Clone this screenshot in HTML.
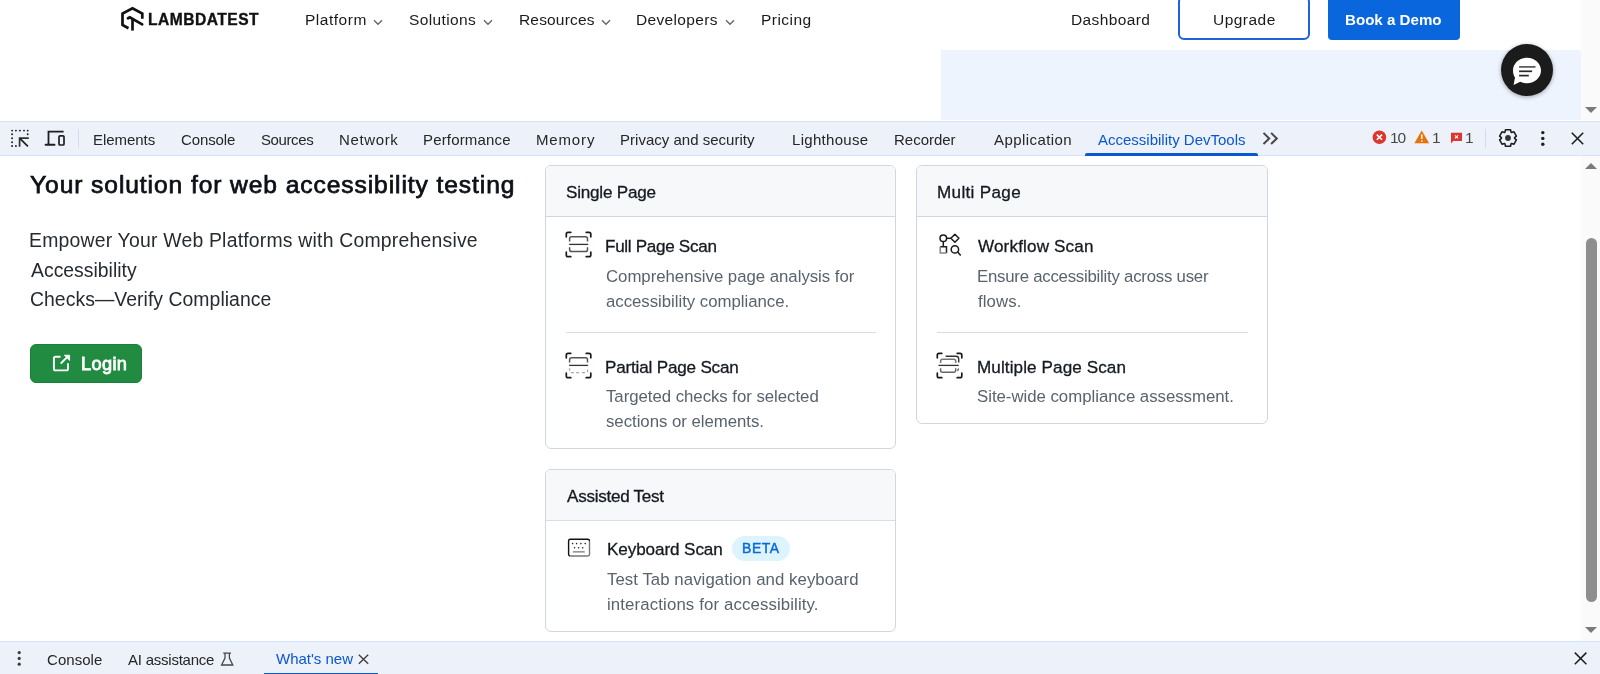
<!DOCTYPE html>
<html><head><meta charset="utf-8"><style>
html,body{margin:0;padding:0;}
body{width:1600px;height:674px;overflow:hidden;position:relative;background:#fff;font-family:"Liberation Sans", sans-serif;}
.a{position:absolute;}
.t{position:absolute;white-space:pre;line-height:normal;font-family:"Liberation Sans", sans-serif;will-change:transform;}
</style></head><body>
<!-- top website area -->
<div class="a" style="left:941px;top:50px;width:641px;height:70px;background:#edf4fe;"></div>
<div class="a" style="left:1581px;top:0;width:19px;height:120px;background:#fafafa;"></div>
<svg class="a" style="left:1584px;top:106px" width="14" height="8" viewBox="0 0 14 8"><path d="M1 1 L13 1 L7 7 Z" fill="#7a7a7a"/></svg>
<!-- logo -->
<svg class="a" style="left:118px;top:4px" width="30" height="30" viewBox="0 0 30 30" fill="none" stroke="#111" stroke-width="2.7" stroke-linejoin="miter" stroke-linecap="butt">
  <path d="M10.5 24.3 L4.5 21 L4.5 9.6 L14.5 4.3 L24.3 9.6 L24.3 14.8"/>
  <path d="M10 14.3 L11.8 13.4 L24.2 20.4" stroke-linecap="round"/>
  <path d="M14.5 14.6 L14.5 26.6"/>
</svg>
<!-- chevrons -->
<svg class="a" style="left:373px;top:19px" width="10" height="7" viewBox="0 0 10 7"><path d="M1 1.2 L5 5.2 L9 1.2" fill="none" stroke="#666" stroke-width="1.4"/></svg>
<svg class="a" style="left:483px;top:19px" width="10" height="7" viewBox="0 0 10 7"><path d="M1 1.2 L5 5.2 L9 1.2" fill="none" stroke="#666" stroke-width="1.4"/></svg>
<svg class="a" style="left:601px;top:19px" width="10" height="7" viewBox="0 0 10 7"><path d="M1 1.2 L5 5.2 L9 1.2" fill="none" stroke="#666" stroke-width="1.4"/></svg>
<svg class="a" style="left:725px;top:19px" width="10" height="7" viewBox="0 0 10 7"><path d="M1 1.2 L5 5.2 L9 1.2" fill="none" stroke="#666" stroke-width="1.4"/></svg>
<!-- buttons -->
<div class="a" style="left:1178px;top:-4px;width:131.5px;height:44px;box-sizing:border-box;border:2px solid #1f62da;border-radius:6px;"></div>
<div class="a" style="left:1328px;top:-4px;width:132px;height:44px;background:#0a66dc;border-radius:4px;"></div>
<!-- chat bubble -->
<div class="a" style="left:1501px;top:44px;width:52px;height:52px;border-radius:50%;background:#1b1b1b;box-shadow:0 1px 4px rgba(0,0,0,0.35);"></div>
<svg class="a" style="left:1510px;top:56px" width="34" height="32" viewBox="0 0 34 32">
  <path d="M17 1.8 C24.9 1.8 31 7.6 31 14.5 C31 21.4 24.9 27.2 17 27.2 C14.4 27.2 12.2 26.7 10.2 25.8 L3.6 29 L5 21.6 C3.6 19.5 3 17.2 3 14.5 C3 7.6 9.1 1.8 17 1.8 Z" fill="#fff"/>
  <path d="M9.1 10.9 H25.5" stroke="#555" stroke-width="1.7"/>
  <path d="M9.1 15.3 H22.1" stroke="#2a2a2a" stroke-width="1.7"/>
  <path d="M9.1 19.6 H18.8" stroke="#2a2a2a" stroke-width="1.7"/>
</svg>

<!-- devtools toolbar -->
<div class="a" style="left:0;top:121px;width:1600px;height:35px;background:#edf1f9;border-top:1px solid #d3e3fd;box-sizing:border-box;"></div>
<div class="a" style="left:0;top:155px;width:1600px;height:1px;background:#d3e3fd;"></div>
<!-- inspect icon -->
<svg class="a" style="left:8px;top:126px" width="24" height="24" viewBox="0 0 24 24" fill="#1f1f1f">
  <circle cx="4.1" cy="4.6" r="0.95"/><circle cx="7.9" cy="4.6" r="0.95"/><circle cx="11.9" cy="4.6" r="0.95"/><circle cx="16" cy="4.6" r="0.95"/><circle cx="19.7" cy="4.6" r="0.95"/>
  <circle cx="4.1" cy="8.3" r="0.95"/><circle cx="19.7" cy="8.3" r="0.95"/>
  <circle cx="4.1" cy="12.2" r="0.95"/><circle cx="4.1" cy="16.2" r="0.95"/>
  <circle cx="4.1" cy="20" r="0.95"/><circle cx="7.9" cy="20" r="0.95"/>
  <path d="M11.6 20.8 V12.1 H20.8" fill="none" stroke="#333" stroke-width="1.7"/>
  <path d="M11.8 12.4 L19.9 20.4" fill="none" stroke="#1f1f1f" stroke-width="1.7"/>
</svg>
<!-- device icon -->
<svg class="a" style="left:44px;top:129px" width="22" height="19" viewBox="0 0 22 19" fill="none" stroke="#1f1f1f">
  <path d="M19.6 2.7 H4.5 V15.8" stroke-width="1.8"/>
  <path d="M1.6 15.8 H10.5" stroke-width="2" stroke-linecap="round"/>
  <rect x="15" y="6.8" width="5" height="9.2" rx="1" stroke-width="1.7"/>
</svg>
<div class="a" style="left:78px;top:129px;width:1px;height:19px;background:#cfdcf5;"></div>
<!-- active tab underline -->
<div class="a" style="left:1085px;top:153px;width:173px;height:3px;background:#0b57d0;border-radius:2px 2px 0 0;"></div>
<!-- >> -->
<svg class="a" style="left:1262px;top:132px" width="18" height="14" viewBox="0 0 18 14" fill="none" stroke="#474747" stroke-width="2">
  <path d="M1.5 0.9 L7.2 6.5 L1.5 12"/><path d="M9.1 0.9 L14.8 6.5 L9.1 12"/>
</svg>
<!-- error icon -->
<svg class="a" style="left:1372px;top:130px" width="15" height="15" viewBox="0 0 15 15">
  <circle cx="7.4" cy="7.2" r="6.8" fill="#dc362e"/>
  <path d="M4.8 4.6 L10 9.8 M10 4.6 L4.8 9.8" stroke="#fff" stroke-width="1.6"/>
</svg>
<!-- warning icon -->
<svg class="a" style="left:1414px;top:130px" width="16" height="14" viewBox="0 0 16 14">
  <path d="M7.7 0.6 L15.2 13.2 L0.4 13.2 Z" fill="#e8710a"/>
  <path d="M7.8 4.6 V9" stroke="#fff" stroke-width="1.5"/><circle cx="7.8" cy="11" r="0.85" fill="#fff"/>
</svg>
<!-- issue icon -->
<svg class="a" style="left:1450px;top:132px" width="13" height="13" viewBox="0 0 13 13">
  <path d="M1 0.8 H12 V9 H3.2 L1 11.6 Z" fill="#dc362e"/>
  <path d="M5 3.4 L8 6.4 M8 3.4 L5 6.4" stroke="#fff" stroke-width="1.2"/>
</svg>
<div class="a" style="left:1485px;top:129px;width:1px;height:19px;background:#cfdcf5;"></div>
<!-- gear -->
<svg class="a" style="left:1498.2px;top:128.2px" width="20" height="20" viewBox="0 0 20 20">
  <path d="M7.00 4.12 L7.49 1.78 L12.51 1.78 L13.00 4.12 L13.59 4.46 L15.87 3.71 L18.38 8.07 L16.59 9.65 L16.59 10.35 L18.38 11.93 L15.87 16.29 L13.59 15.54 L13.00 15.88 L12.51 18.22 L7.49 18.22 L7.00 15.88 L6.41 15.54 L4.13 16.29 L1.62 11.93 L3.41 10.35 L3.41 9.65 L1.62 8.07 L4.13 3.71 L6.41 4.46 Z" fill="none" stroke="#1f1f1f" stroke-width="1.6" stroke-linejoin="round"/>
  <circle cx="10" cy="10" r="2.9" fill="#333"/>
</svg>
<!-- kebab -->
<svg class="a" style="left:1539px;top:130px" width="8" height="17" viewBox="0 0 8 17" fill="#1f1f1f">
  <circle cx="3.8" cy="2.6" r="1.7"/><circle cx="3.8" cy="8.4" r="1.7"/><circle cx="3.8" cy="14.2" r="1.7"/>
</svg>
<!-- close -->
<svg class="a" style="left:1570px;top:131px" width="15" height="15" viewBox="0 0 15 15" fill="none" stroke="#1f1f1f" stroke-width="1.6">
  <path d="M1.8 1.8 L13.2 13.2 M13.2 1.8 L1.8 13.2"/>
</svg>

<!-- content scrollbar -->
<div class="a" style="left:1581px;top:156px;width:19px;height:485px;background:#fafafa;"></div>
<svg class="a" style="left:1584px;top:161px" width="14" height="9" viewBox="0 0 14 9"><path d="M1 8 L13 8 L7 2 Z" fill="#7a7a7a"/></svg>
<div class="a" style="left:1586px;top:238px;width:10.5px;height:364px;background:#8e8e8e;border-radius:6px;"></div>
<svg class="a" style="left:1584px;top:626px" width="14" height="9" viewBox="0 0 14 9"><path d="M1 1 L13 1 L7 7 Z" fill="#7a7a7a"/></svg>

<!-- left: login button -->
<div class="a" style="left:30px;top:344px;width:112px;height:39px;background:#218b42;border-radius:6px;box-sizing:border-box;border:1px solid #1a7f37;"></div>
<svg class="a" style="left:52px;top:354px" width="19" height="19" viewBox="0 0 19 19" fill="none" stroke="#fff" stroke-width="1.9" stroke-linecap="round" stroke-linejoin="round">
  <path d="M7.8 2.75 H3.5 Q1.9 2.75 1.9 4.35 V14.8 Q1.9 16.4 3.5 16.4 H14.4 Q16 16.4 16 14.8 V10"/>
  <path d="M9.3 9 L15.6 2.7"/>
  <path d="M12.6 1.2 L17.6 1.2 L17.6 6.2 Z" fill="#fff" stroke-width="0.8"/>
</svg>

<!-- cards -->
<div class="a" style="left:545px;top:165px;width:351px;height:284px;box-sizing:border-box;border:1px solid #d0d7de;border-radius:6px;overflow:hidden;">
  <div style="height:50px;background:#f6f8fa;border-bottom:1px solid #d1d9e0;"></div>
</div>
<div class="a" style="left:566px;top:332px;width:310px;height:1px;background:#d8dee4;"></div>
<div class="a" style="left:916px;top:165px;width:352px;height:259px;box-sizing:border-box;border:1px solid #d0d7de;border-radius:6px;overflow:hidden;">
  <div style="height:50px;background:#f6f8fa;border-bottom:1px solid #d1d9e0;"></div>
</div>
<div class="a" style="left:937px;top:332px;width:311px;height:1px;background:#d8dee4;"></div>
<div class="a" style="left:545px;top:469px;width:351px;height:163px;box-sizing:border-box;border:1px solid #d0d7de;border-radius:6px;overflow:hidden;">
  <div style="height:49.5px;background:#f6f8fa;border-bottom:1px solid #d8dee4;"></div>
</div>
<!-- BETA badge -->
<div class="a" style="left:732px;top:535.5px;width:58px;height:25px;background:#ddf4ff;border-radius:13px;"></div>

<!-- card icons -->
<svg class="a" style="left:562px;top:228px" width="34" height="34" viewBox="0 0 34 34" fill="none">
  <path d="M4.3 8.8 V6 Q4.3 4.3 6 4.3 H8.8 M24.2 4.3 H27 Q28.8 4.3 28.8 6 V8.8 M28.8 24.2 V27 Q28.8 28.7 27 28.7 H24.2 M8.8 28.7 H6 Q4.3 28.7 4.3 27 V24.2" stroke="#1a1a1a" stroke-width="1.7" stroke-linecap="round"/>
  <path d="M7.6 13.6 V10.8 Q7.6 8.7 9.7 8.7 H23.4 Q25.5 8.7 25.5 10.8 V13.6" stroke="#555" stroke-width="1.5"/>
  <path d="M7.1 16.4 H26.2" stroke="#333" stroke-width="1.3"/>
  <path d="M7.6 19.2 V21.4 Q7.6 23.5 9.7 23.5 H23.4 Q25.5 23.5 25.5 21.4 V19.2" stroke="#555" stroke-width="1.5"/>
</svg>
<svg class="a" style="left:562px;top:349px" width="34" height="34" viewBox="0 0 34 34" fill="none">
  <path d="M4.3 8.8 V6 Q4.3 4.3 6 4.3 H8.8 M24.2 4.3 H27 Q28.8 4.3 28.8 6 V8.8 M28.8 24.2 V27 Q28.8 28.7 27 28.7 H24.2 M8.8 28.7 H6 Q4.3 28.7 4.3 27 V24.2" stroke="#1a1a1a" stroke-width="1.7" stroke-linecap="round"/>
  <path d="M7.6 13.6 V10.8 Q7.6 8.7 9.7 8.7 H23.4 Q25.5 8.7 25.5 10.8 V13.6" stroke="#555" stroke-width="1.5"/>
  <path d="M7.1 16.4 H26.2" stroke="#333" stroke-width="1.3"/>
  <path d="M8.8 23.7 H11.9 M14.1 23.7 H17.2 M19.9 23.7 H23 M7.6 19.2 V21.7 M25.5 20.4 V23.2" stroke="#aaa" stroke-width="1.3"/>
</svg>
<svg class="a" style="left:933px;top:228px" width="34" height="34" viewBox="0 0 34 34" fill="none" stroke="#1a1a1a" stroke-width="1.5">
  <circle cx="10.3" cy="10.3" r="3.3"/>
  <path d="M13.6 10.3 H18.2"/>
  <path d="M21.9 6.3 L25.9 10.3 L21.9 14.3 L17.9 10.3 Z" stroke-linejoin="round"/>
  <path d="M10.3 13.6 V18.7"/>
  <path d="M7.2 18.8 H13.5 V25.1" stroke="#222"/>
  <path d="M13.5 25.1 H7.2 V18.8" stroke="#888"/>
  <circle cx="21.9" cy="21.4" r="3.7"/>
  <path d="M24.6 24.1 L27.3 26.9" stroke-linecap="round"/>
</svg>
<svg class="a" style="left:933px;top:349px" width="34" height="34" viewBox="0 0 34 34" fill="none">
  <path d="M4.3 8.8 V6 Q4.3 4.3 6 4.3 H8.8 M24.2 4.3 H27 Q28.8 4.3 28.8 6 V8.8 M28.8 24.2 V27 Q28.8 28.7 27 28.7 H24.2 M8.8 28.7 H6 Q4.3 28.7 4.3 27 V24.2" stroke="#1a1a1a" stroke-width="1.7" stroke-linecap="round"/>
  <path d="M12.6 7.3 H23 Q25.7 7.3 25.7 10 V13.6" stroke="#333" stroke-width="1.4"/>
  <path d="M7.6 13.9 V12.3 Q7.6 10.3 9.6 10.3 H20.7 Q22.7 10.3 22.7 12.3 V13.9" stroke="#777" stroke-width="1.5"/>
  <path d="M5.5 16.4 H25.7" stroke="#333" stroke-width="1.3"/>
  <path d="M7.6 19.2 V21.3 Q7.6 23.3 9.6 23.3 H20.7 Q22.7 23.3 22.7 21.3 V19.2" stroke="#666" stroke-width="1.5"/>
  <path d="M25.5 19.4 Q25.5 21 24.3 21.6" stroke="#555" stroke-width="1.3"/>
</svg>
<svg class="a" style="left:562px;top:530px" width="34" height="34" viewBox="0 0 34 34" fill="none">
  <path d="M27.5 11 Q27.5 9.3 25.8 9.3 H8.3 Q6.6 9.3 6.6 11 V24.3 Q6.6 26 8.3 26" stroke="#111" stroke-width="1.4"/>
  <path d="M8.3 26 H25.8 Q27.5 26 27.5 24.3 V11" stroke="#777" stroke-width="1.4"/>
  <g fill="#222"><circle cx="10.6" cy="13.6" r="0.8"/><circle cx="14.6" cy="13.6" r="0.8"/><circle cx="18.9" cy="13.6" r="0.8"/><circle cx="23.2" cy="13.6" r="0.8"/>
  <circle cx="12.6" cy="17.7" r="0.8"/><circle cx="16.6" cy="17.7" r="0.8"/><circle cx="20.7" cy="17.7" r="0.8"/></g>
  <path d="M11.4 21.9 H22.2" stroke="#777" stroke-width="1.4" stroke-linecap="round"/>
</svg>

<!-- drawer -->
<div class="a" style="left:0;top:641px;width:1600px;height:33px;background:#edf1f9;border-top:1px solid #d3e3fd;box-sizing:border-box;"></div>
<svg class="a" style="left:15px;top:650px" width="8" height="17" viewBox="0 0 8 17" fill="#3b3b3b">
  <circle cx="4.2" cy="2.6" r="1.6"/><circle cx="4.2" cy="8.4" r="1.6"/><circle cx="4.2" cy="14.2" r="1.6"/>
</svg>
<svg class="a" style="left:220px;top:652px" width="15" height="15" viewBox="0 0 15 15" fill="none" stroke="#474747" stroke-width="1.3">
  <path d="M3.2 1.2 H11 M5 1.2 V6 L1.6 13 H12.8 L9.4 6 V1.2"/>
</svg>
<svg class="a" style="left:357px;top:653px" width="13" height="13" viewBox="0 0 13 13" fill="none" stroke="#3b3b3b" stroke-width="1.3">
  <path d="M1.8 1.8 L11.2 10.8 M11.2 1.8 L1.8 10.8"/>
</svg>
<div class="a" style="left:264px;top:673px;width:114px;height:1px;background:#0b57d0;"></div>
<svg class="a" style="left:1573px;top:651px" width="15" height="15" viewBox="0 0 15 15" fill="none" stroke="#1f1f1f" stroke-width="1.5">
  <path d="M1.8 1.6 L13.4 13.2 M13.4 1.6 L1.8 13.2"/>
</svg>

<div class="t" style="left:304.66px;top:11px;font-size:15.5px;font-weight:400;color:#1a1a1a;letter-spacing:0.515px;">Platform</div>
<div class="t" style="left:408.78px;top:11px;font-size:15.5px;font-weight:400;color:#1a1a1a;letter-spacing:0.365px;">Solutions</div>
<div class="t" style="left:518.51px;top:11px;font-size:15.5px;font-weight:400;color:#1a1a1a;letter-spacing:0.171px;">Resources</div>
<div class="t" style="left:636.46px;top:11px;font-size:15.5px;font-weight:400;color:#1a1a1a;letter-spacing:0.345px;">Developers</div>
<div class="t" style="left:760.96px;top:11px;font-size:15.5px;font-weight:400;color:#1a1a1a;letter-spacing:0.455px;">Pricing</div>
<div class="t" style="left:1071.46px;top:11.2px;font-size:15.5px;font-weight:400;color:#1a1a1a;letter-spacing:0.373px;">Dashboard</div>
<div class="t" style="left:1212.51px;top:11.2px;font-size:15.5px;font-weight:400;color:#1a1a1a;letter-spacing:0.465px;">Upgrade</div>
<div class="t" style="left:1345.49px;top:11.3px;font-size:15.11px;font-weight:700;color:#ffffff;">Book a Demo</div>
<div class="t" style="left:148.24px;top:10.5px;font-size:15.6px;font-weight:700;color:#111111;-webkit-text-stroke:0.35px #111111;letter-spacing:0.478px;">LAMBDATEST</div>
<div class="t" style="left:93.3px;top:130.8px;font-size:15px;font-weight:400;color:#262626;letter-spacing:-0.054px;">Elements</div>
<div class="t" style="left:181.25px;top:130.8px;font-size:15px;font-weight:400;color:#262626;letter-spacing:-0.124px;">Console</div>
<div class="t" style="left:261.3px;top:130.8px;font-size:15px;font-weight:400;color:#262626;letter-spacing:-0.396px;">Sources</div>
<div class="t" style="left:339.4px;top:130.8px;font-size:15px;font-weight:400;color:#262626;letter-spacing:0.640px;">Network</div>
<div class="t" style="left:423.4px;top:130.8px;font-size:15px;font-weight:400;color:#262626;letter-spacing:0.167px;">Performance</div>
<div class="t" style="left:536.0px;top:130.8px;font-size:15px;font-weight:400;color:#262626;letter-spacing:0.846px;">Memory</div>
<div class="t" style="left:620.0px;top:130.8px;font-size:15px;font-weight:400;color:#262626;letter-spacing:0.015px;">Privacy and security</div>
<div class="t" style="left:792.3px;top:130.8px;font-size:15px;font-weight:400;color:#262626;letter-spacing:0.294px;">Lighthouse</div>
<div class="t" style="left:893.6px;top:130.8px;font-size:15px;font-weight:400;color:#262626;letter-spacing:-0.014px;">Recorder</div>
<div class="t" style="left:993.8px;top:130.8px;font-size:15px;font-weight:400;color:#262626;letter-spacing:0.426px;">Application</div>
<div class="t" style="left:1097.6px;top:130.9px;font-size:15px;font-weight:400;color:#0b57d0;letter-spacing:0.000px;">Accessibility DevTools</div>
<div class="t" style="left:1389.91px;top:129.4px;font-size:15.5px;font-weight:400;color:#474747;letter-spacing:-1.095px;">10</div>
<div class="t" style="left:1431.71px;top:129.4px;font-size:15.5px;font-weight:400;color:#474747;">1</div>
<div class="t" style="left:1465.32px;top:129.4px;font-size:15.5px;font-weight:400;color:#474747;">1</div>
<div class="t" style="left:30.48px;top:171px;font-size:24.6px;font-weight:400;color:#0d1117;-webkit-text-stroke:0.75px #0d1117;letter-spacing:0.912px;">Your solution for web accessibility testing</div>
<div class="t" style="left:28.95px;top:228.6px;font-size:19.4px;font-weight:400;color:#262b31;letter-spacing:0.210px;">Empower Your Web Platforms with Comprehensive</div>
<div class="t" style="left:30.5px;top:258.7px;font-size:19.4px;font-weight:400;color:#262b31;letter-spacing:0.004px;">Accessibility</div>
<div class="t" style="left:29.53px;top:288.2px;font-size:19.4px;font-weight:400;color:#262b31;letter-spacing:0.041px;">Checks—Verify Compliance</div>
<div class="t" style="left:80.84px;top:353.6px;font-size:18.2px;font-weight:400;color:#ffffff;-webkit-text-stroke:0.8px #ffffff;letter-spacing:0.362px;">Login</div>
<div class="t" style="left:565.97px;top:183.4px;font-size:17.1px;font-weight:400;color:#151a20;-webkit-text-stroke:0.3px #151a20;letter-spacing:-0.222px;">Single Page</div>
<div class="t" style="left:605.18px;top:236.9px;font-size:17.1px;font-weight:400;color:#151a20;-webkit-text-stroke:0.3px #151a20;letter-spacing:-0.311px;">Full Page Scan</div>
<div class="t" style="left:605.56px;top:266.6px;font-size:16.8px;font-weight:400;color:#59636e;letter-spacing:-0.023px;">Comprehensive page analysis for</div>
<div class="t" style="left:605.73px;top:291.5px;font-size:16.8px;font-weight:400;color:#59636e;letter-spacing:-0.023px;">accessibility compliance.</div>
<div class="t" style="left:605.18px;top:357.8px;font-size:17.1px;font-weight:400;color:#151a20;-webkit-text-stroke:0.3px #151a20;letter-spacing:-0.191px;">Partial Page Scan</div>
<div class="t" style="left:606.06px;top:387.2px;font-size:16.8px;font-weight:400;color:#59636e;letter-spacing:-0.032px;">Targeted checks for selected</div>
<div class="t" style="left:606.06px;top:412px;font-size:16.8px;font-weight:400;color:#59636e;letter-spacing:-0.032px;">sections or elements.</div>
<div class="t" style="left:937.08px;top:182.8px;font-size:17.1px;font-weight:400;color:#151a20;-webkit-text-stroke:0.3px #151a20;letter-spacing:0.322px;">Multi Page</div>
<div class="t" style="left:978.35px;top:236.8px;font-size:17.1px;font-weight:400;color:#151a20;-webkit-text-stroke:0.3px #151a20;letter-spacing:0.145px;">Workflow Scan</div>
<div class="t" style="left:976.66px;top:266.9px;font-size:16.8px;font-weight:400;color:#59636e;letter-spacing:-0.234px;">Ensure accessibility across user</div>
<div class="t" style="left:977.83px;top:291.9px;font-size:16.8px;font-weight:400;color:#59636e;letter-spacing:0.080px;">flows.</div>
<div class="t" style="left:976.78px;top:357.6px;font-size:17.1px;font-weight:400;color:#151a20;-webkit-text-stroke:0.3px #151a20;letter-spacing:0.099px;">Multiple Page Scan</div>
<div class="t" style="left:977.33px;top:387.4px;font-size:16.8px;font-weight:400;color:#59636e;letter-spacing:-0.018px;">Site-wide compliance assessment.</div>
<div class="t" style="left:566.55px;top:486.9px;font-size:17.1px;font-weight:400;color:#151a20;-webkit-text-stroke:0.3px #151a20;letter-spacing:-0.273px;">Assisted Test</div>
<div class="t" style="left:606.58px;top:540.1px;font-size:17.1px;font-weight:400;color:#151a20;-webkit-text-stroke:0.3px #151a20;letter-spacing:-0.092px;">Keyboard Scan</div>
<div class="t" style="left:741.81px;top:539.6px;font-size:13.92px;font-weight:400;color:#0969da;-webkit-text-stroke:0.45px #0969da;letter-spacing:0.6px;">BETA</div>
<div class="t" style="left:607.26px;top:570.1px;font-size:16.8px;font-weight:400;color:#59636e;letter-spacing:0.057px;">Test Tab navigation and keyboard</div>
<div class="t" style="left:606.59px;top:595.2px;font-size:16.8px;font-weight:400;color:#59636e;letter-spacing:0.129px;">interactions for accessibility.</div>
<div class="t" style="left:47.05px;top:650.6px;font-size:15px;font-weight:400;color:#262626;letter-spacing:0.043px;">Console</div>
<div class="t" style="left:128.0px;top:650.6px;font-size:15px;font-weight:400;color:#262626;letter-spacing:-0.231px;">AI assistance</div>
<div class="t" style="left:275.6px;top:650.4px;font-size:15px;font-weight:400;color:#0b57d0;letter-spacing:-0.003px;">What's new</div>
</body></html>
